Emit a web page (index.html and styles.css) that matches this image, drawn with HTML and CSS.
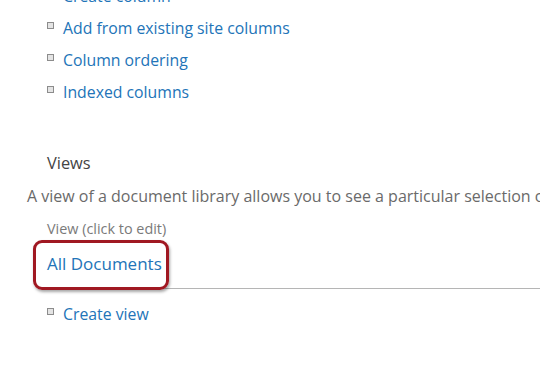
FILE: index.html
```html
<!DOCTYPE html>
<html lang="en">
<head>
    <meta charset="UTF-8">
    <title>Document Library Settings</title>
    <link rel="stylesheet" href="styles.css">
</head>
<body>
<div id="page">
    <ul class="links">
        <li><span class="bullet"></span><a href="javascript:;">Create column</a></li>
        <li><span class="bullet"></span><a href="javascript:;">Add from existing site columns</a></li>
        <li><span class="bullet"></span><a href="javascript:;">Column ordering</a></li>
        <li><span class="bullet"></span><a href="javascript:;">Indexed columns</a></li>
    </ul>

    <div class="views">
        <h3 class="views-title">Views</h3>
        <p class="views-desc">A view of a document library allows you to see a particular selection of items or to see the items sorted in a particular order.</p>
        <div class="view-head">View (click to edit)</div>
        <div class="view-row">
            <a href="javascript:;" class="view-link">All Documents</a>
            <span class="highlight"></span>
        </div>
    </div>

    <ul class="links links-bottom">
        <li><span class="bullet"></span><a href="javascript:;">Create view</a></li>
    </ul>
</div>
</body>
</html>
```

FILE: styles.css
```css
* {
    margin: 0;
    padding: 0;
    list-style: none;
}

body {
    background: #fff;
    font-family: "Open Sans", "Noto Sans", sans-serif;
    overflow: hidden;
}

a {
    color: #2274b8;
    text-decoration: none;
}

#page {
    width: 540px;
    height: 384px;
    overflow: hidden;
}

.links {
    margin-top: -20px;
    padding-left: 47px;
}

.links li {
    display: flex;
    align-items: center;
    height: 32px;
    font-size: 15.8px;
}

.bullet {
    width: 5px;
    height: 5px;
    border: 1px solid #8c8c8c;
    background: #e4e4e4;
    margin-right: 9px;
    margin-top: -5px;
}

.views {
    margin-top: 44px;
}

.views-title {
    padding-left: 47px;
    font-size: 16.4px;
    font-weight: normal;
    line-height: 22px;
    color: #444;
}

.views-desc {
    margin-top: 11px;
    padding-left: 27px;
    font-size: 16px;
    line-height: 22px;
    color: #6a6a6a;
    white-space: nowrap;
}

.view-head {
    margin-top: 12px;
    padding-left: 47px;
    font-size: 14.4px;
    line-height: 20px;
    color: #7a7a7a;
}

.view-row {
    position: relative;
    height: 47px;
    border-bottom: 1px solid #b5b5b5;
    margin-top: 2px;
    margin-left: 40px;
}

.view-link {
    display: block;
    padding-left: 7px;
    line-height: 46px;
    font-size: 17px;
}

/* red annotation round the view name */
.highlight {
    position: absolute;
    left: -7px;
    top: -1px;
    width: 130px;
    height: 44px;
    border: 3px solid #a01822;
    border-radius: 9px;
    box-shadow: 1px 2px 3px rgba(0, 0, 0, 0.35);
}

.links-bottom {
    margin-top: 9px;
}
```
